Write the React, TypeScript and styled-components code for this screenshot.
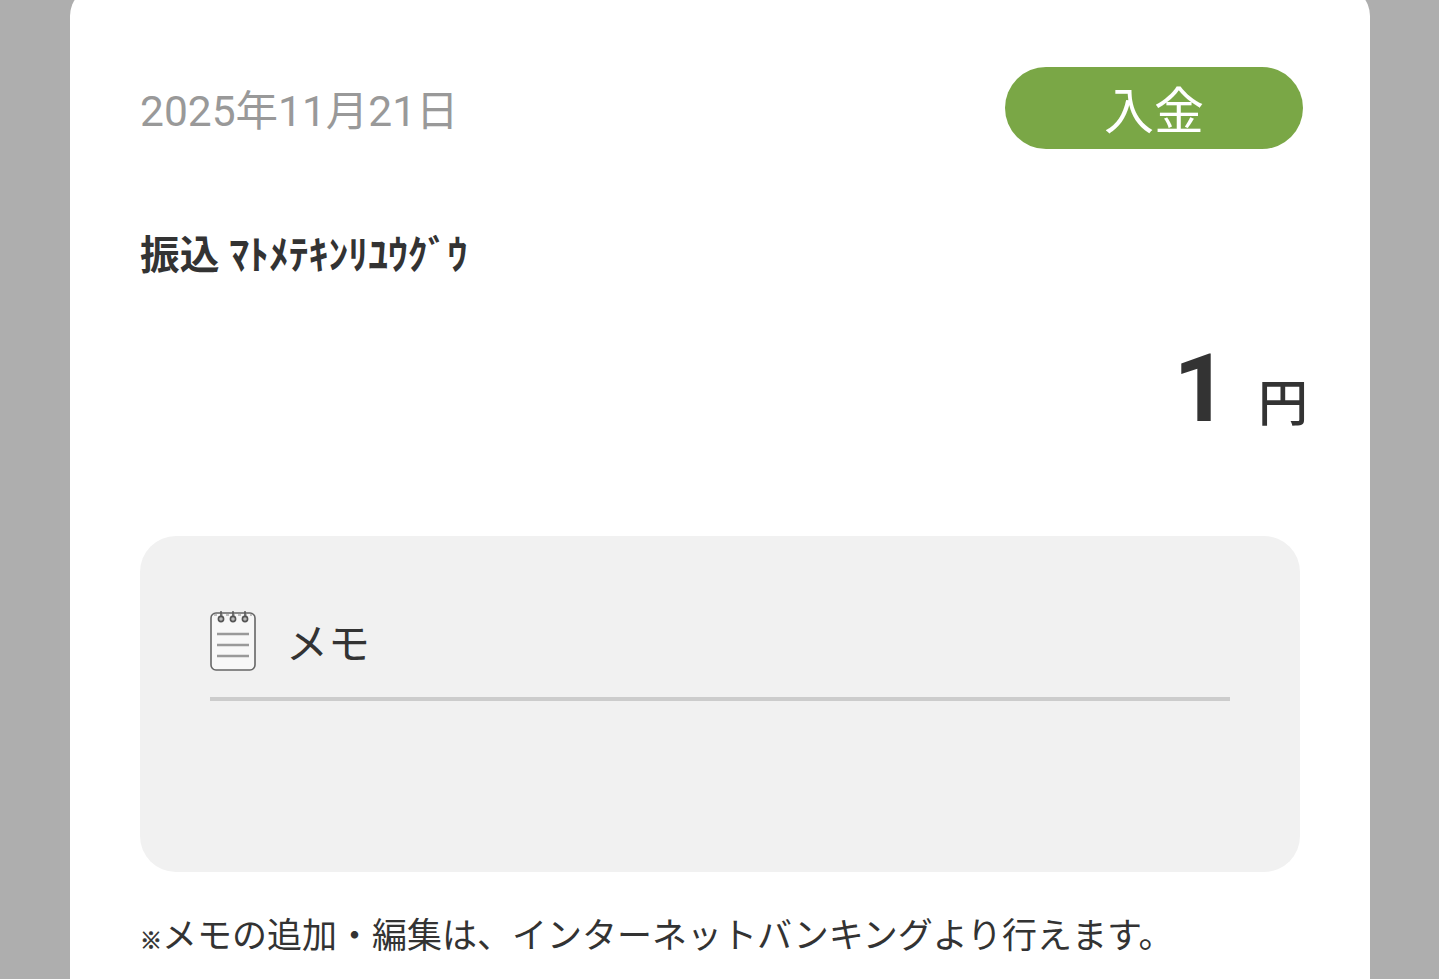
import React from 'react'
import styled, { createGlobalStyle } from 'styled-components'

const GlobalStyle = createGlobalStyle`
    html, body {
        margin: 0;
        height: 100%;
        overflow: hidden;
        background: #aeaeae;
    }
    body {
        font-family: Roboto, "Noto Sans CJK JP", sans-serif;
    }
`

const Page = styled.div`
    width: 1439px;
    height: 979px;
    overflow: hidden;
    box-sizing: border-box;
    padding: 0 69px 0 70px;
`

const Sheet = styled.main`
    height: 1040px;
    margin-top: -14px;
    box-sizing: border-box;
    padding: 81px 70px 0;
    background: #fff;
    border-radius: 30px;
`

const HeaderRow = styled.div`
    display: flex;
    justify-content: space-between;
    align-items: center;
    padding-right: 67px;
    margin-right: -70px;
    height: 82px;
`

const DateText = styled.span`
    font-size: 42.5px;
    color: #999;
    margin-top: -2px;
`

const Badge = styled.span`
    width: 298px;
    height: 82px;
    box-sizing: border-box;
    padding-bottom: 2px;
    border-radius: 41px;
    background: #7aa746;
    color: #fff;
    font-size: 50px;
    display: flex;
    align-items: center;
    justify-content: center;
`

const Payee = styled.div`
    margin-top: 82px;
    font-size: 39.7px;
    font-weight: 700;
    color: #333;
    line-height: 50px;
`

const AmountRow = styled.div`
    margin-top: 58px;
    display: flex;
    justify-content: flex-end;
    align-items: baseline;
    gap: 30px;
    margin-right: -8px;
    color: #333;
`

const Amount = styled.span`
    font-size: 95px;
    font-weight: 700;
    line-height: 100px;
`

const Unit = styled.span`
    font-size: 50px;
    font-weight: 500;
`

const MemoCard = styled.section`
    margin-top: 97px;
    width: 1160px;
    height: 336px;
    box-sizing: border-box;
    padding: 69px 70px 0;
    background: #f1f1f1;
    border-radius: 36px;
`

const MemoHead = styled.div`
    display: flex;
    align-items: center;
    gap: 30px;
    height: 70px;
    padding-bottom: 22px;
    border-bottom: 4px solid #ccc;
`

const MemoTitle = styled.span`
    font-size: 42px;
    color: #333;
`

const Note = styled.p`
    margin: 35px 0 0;
    font-size: 35px;
    color: #333;
    white-space: nowrap;
`

const NoteMark = styled.span`
    font-size: 22px;
    -webkit-text-stroke: 0.7px #333;
`

const MemoIcon = () => (
    <svg width="46" height="61" viewBox="0 0 46 61" fill="none">
        <rect x="1" y="3" width="44" height="57" rx="5" fill="#f7f7f7" stroke="#666" strokeWidth="1.6" />
        <path d="M7 24h32M7 35h32M7 46h32" stroke="#999" strokeWidth="2.4" />
        <path d="M4 5h38" stroke="#aaa" strokeWidth="1.6" strokeDasharray="3 3" />
        <g stroke="#555" strokeWidth="1.6" fill="#bbb">
            <circle cx="11" cy="9" r="2.6" />
            <circle cx="23" cy="9" r="2.6" />
            <circle cx="35" cy="9" r="2.6" />
        </g>
        <path d="M11 1v6M23 1v6M35 1v6" stroke="#555" strokeWidth="1.4" />
    </svg>
)

const App = () => (
    <>
        <GlobalStyle />
        <Page>
            <Sheet>
                <HeaderRow>
                    <DateText>2025年11月21日</DateText>
                    <Badge>入金</Badge>
                </HeaderRow>
                <Payee>振込 ﾏﾄﾒﾃｷﾝﾘﾕｳｸﾞｳ</Payee>
                <AmountRow>
                    <Amount>1</Amount>
                    <Unit>円</Unit>
                </AmountRow>
                <MemoCard>
                    <MemoHead>
                        <MemoIcon />
                        <MemoTitle>メモ</MemoTitle>
                    </MemoHead>
                </MemoCard>
                <Note><NoteMark>※</NoteMark>メモの追加・編集は、インターネットバンキングより行えます。</Note>
            </Sheet>
        </Page>
    </>
)

export default App
